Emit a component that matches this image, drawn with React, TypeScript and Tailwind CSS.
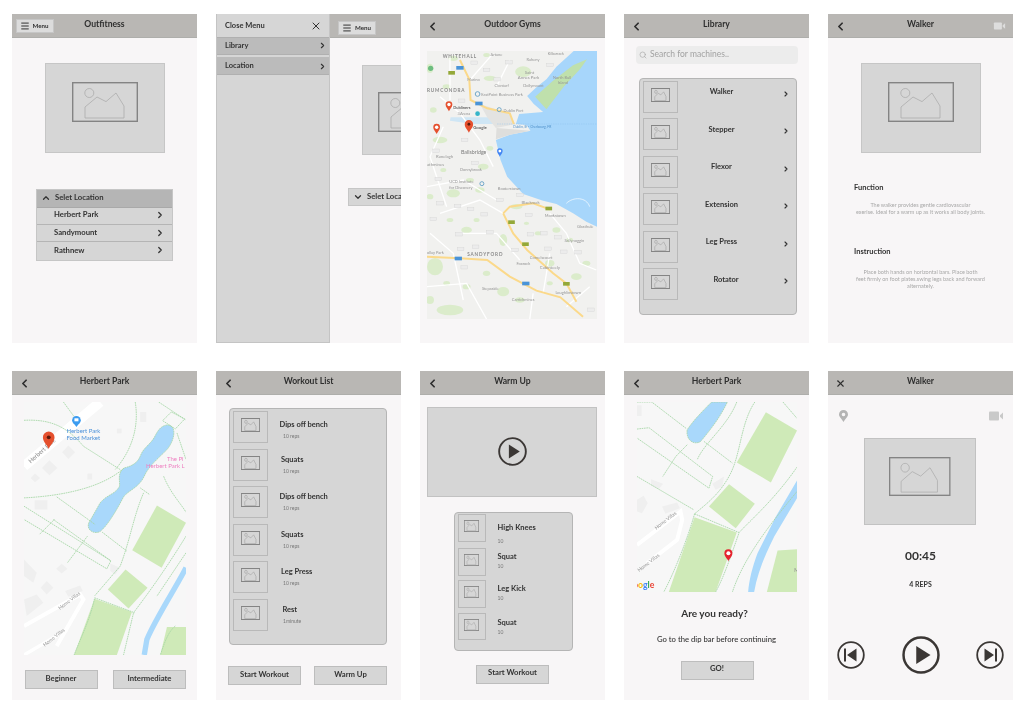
import { ChevronDown, ChevronLeft, ChevronRight, ChevronUp, Menu, Search, X } from "lucide-react";
import type { ReactNode } from "react";

function Header({ title, left }: { title: string; left?: ReactNode }) {
  return (
    <div className="grid h-[24px] shrink-0 grid-cols-[1fr_auto_1fr] items-center border-b border-[#aeaeab] bg-[#b9b7b4] text-[#2e2e2e]">
      <div className="flex pl-[6px] pt-[1px]">
        {left ?? <ChevronLeft size={13} strokeWidth={3.2} />}
      </div>
      <span className="pb-[3px] text-[8.6px] font-bold leading-[11px]">{title}</span>
      <span />
    </div>
  );
}

function Picture({ small }: { small?: boolean }) {
  return (
    <svg className="h-full w-full" viewBox="0 0 66 40" preserveAspectRatio="none">
      <rect x="0.7" y="0.7" width="64.6" height="38.6" fill="none" stroke="#848484" strokeWidth={small ? 4.4 : 1.4} />
      <circle cx="17.3" cy="11" r="4.5" fill="none" stroke="#acacac" strokeWidth={small ? 2.4 : 0.8} />
      <path d="M13 36V25L25 15l9 4.6L44 11l8 13v12z" fill="none" stroke="#acacac" strokeWidth={small ? 2.4 : 0.8} />
    </svg>
  );
}

function ImageBox() {
  return (
    <div className="mx-auto flex h-[90px] w-[120px] shrink-0 justify-center border border-[#c6c6c6] bg-[#d6d6d6] pt-[18px]">
      <div className="h-[40px] w-[66px]">
        <Picture />
      </div>
    </div>
  );
}

function Thumb({ big = true }: { big?: boolean }) {
  return big ? (
    <div className="flex h-[32px] w-[35px] shrink-0 justify-center border border-[#b9b9b9] pt-[6px]">
      <div className="h-[14px] w-[19px]">
        <Picture small />
      </div>
    </div>
  ) : (
    <div className="flex h-[27.5px] w-[27.5px] shrink-0 justify-center border border-[#b9b9b9] pt-[5px]">
      <div className="h-[12px] w-[15px]">
        <Picture small />
      </div>
    </div>
  );
}

function Button({ label, className }: { label: string; className: string }) {
  return (
    <button
      type="button"
      className={`flex h-[19px] w-[73px] items-center justify-center border border-[#bdbdbd] bg-[#d6d6d6] pb-[2px] text-[7.7px] font-bold text-[#333] ${className}`}
    >
      {label}
    </button>
  );
}

function MenuButton() {
  return (
    <div className="flex h-[14px] w-[38px] items-center gap-[3px] border border-[#c6c6c6] bg-[#dcdcdc] pl-[3px] text-[6.2px] font-bold text-[#333]">
      <Menu size={10} strokeWidth={2.4} />
      Menu
    </div>
  );
}

function VideoIcon({ color, className }: { color: string; className: string }) {
  return (
    <svg className={className} viewBox="0 0 14 10" fill={color}>
      <rect x="0" y="0.5" width="10" height="9" rx="1" />
      <path d="M11 4.2 14 1.5v7L11 5.8z" />
    </svg>
  );
}

function Pin({ x, y, color = "#e5502e", k = 1, ring }: { x: number; y: number; color?: string; k?: number; ring?: boolean }) {
  return (
    <g transform={`translate(${x} ${y}) scale(${k})`}>
      <path d="M0 0C-3-8-12-14-12-24A12 12 0 1 1 12-24C12-14 3-8 0 0Z" fill={color} />
      <circle cx="0" cy="-24" r={ring ? 6 : 4} fill={ring ? "#fff" : "#5c1a0c"} />
    </g>
  );
}

const roadBadges = [
  [193, 188], [230, 210], [297, 187], [262, 238], [421, 195], [155, 302], [164, 420], [78, 452], [195, 489], [85, 537],
  [270, 600], [90, 610], [143, 618], [182, 627], [223, 643], [70, 657], [357, 645], [240, 697], [147, 703], [362, 703],
  [402, 700], [445, 712], [415, 746], [462, 755], [505, 757], [152, 747], [197, 740], [316, 750], [163, 802], [544, 929], [331, 585],
];
const motorwayBadges = [[150, 203], [207, 310], [145, 775], [348, 850]];
const nationalBadges = [[125, 218], [417, 625], [305, 666], [347, 732], [470, 851]];
const parkPatches = [
  [60, 205, 10, 14], [240, 235, 18, 8], [340, 215, 24, 16], [90, 420, 22, 10], [220, 500, 16, 9], [130, 580, 20, 12],
  [320, 620, 18, 8], [75, 800, 24, 26], [170, 690, 16, 10], [280, 875, 18, 14], [420, 790, 14, 10], [120, 930, 40, 16],
  [280, 720, 12, 18], [500, 830, 16, 10], [210, 570, 14, 8], [440, 690, 12, 8], [130, 175, 14, 8], [230, 165, 10, 6],
  [110, 260, 12, 7], [70, 330, 10, 8], [180, 540, 12, 6], [240, 445, 10, 7], [100, 510, 9, 6], [60, 590, 10, 8],
  [200, 660, 9, 6], [120, 660, 10, 6], [385, 700, 10, 6], [350, 670, 8, 5], [480, 720, 10, 7], [530, 790, 12, 8],
  [420, 850, 9, 6], [330, 900, 14, 8], [230, 820, 11, 8], [170, 860, 12, 8], [60, 900, 12, 12], [110, 850, 10, 7],
];
const cityLabels: [string, number, number, number][] = [
  ["Artane", 242, 168, 12], ["Raheny", 350, 184, 12], ["Kilbarrack", 414, 165, 11], ["Saint", 345, 222, 13], ["Annes Park", 324, 238, 13],
  ["Clontarf", 254, 262, 12], ["Dollymount", 340, 262, 12], ["Marino", 172, 242, 12], ["North Bull", 430, 236, 12], ["Island", 444, 252, 12],
  ["EastPoint Business Park", 214, 288, 12], ["Dublin Port", 281, 335, 12], ["3Arena", 143, 346, 12], ["Ranelagh", 78, 473, 13], ["athmines", 51, 499, 13],
  ["Donnybrook", 150, 514, 12], ["UCD Institute", 118, 550, 12], ["for Discovery", 118, 566, 12], ["Booterstown", 264, 570, 12], ["Blackrock", 335, 613, 13],
  ["Monkstown", 405, 651, 12], ["Glasthule", 502, 683, 12], ["Sallynoggin", 464, 727, 12], ["ollay Park", 51, 761, 12], ["Foxrock", 320, 796, 12],
  ["Cornelscourt", 360, 777, 12], ["Cabinteely", 390, 806, 13], ["Stepaside", 216, 871, 12], ["Carrickmines", 306, 902, 12], ["Loughlinstown", 437, 883, 12],
];

function GymsMap() {
  return (
    <svg className="h-[268px] w-[170px] shrink-0" viewBox="51 153 511 804" preserveAspectRatio="none">
      <rect x="51" y="153" width="511" height="804" fill="#f1f1ef" />
      {parkPatches.map(([cx, cy, rx, ry]) => (
        <ellipse key={`${cx}-${cy}`} cx={cx} cy={cy} rx={rx} ry={ry} fill="#dbeccb" />
      ))}
      <path
        d="M492 153H562V680L530 665 490 640 440 612 400 602 340 582 292 530 272 480 258 420 300 404 362 392 350 375 318 372 328 342 400 336 372 312 352 288 380 262 410 238 440 200Z"
        fill="#a7d6fb"
      />
      <path d="M410 328 376 290 430 242 490 196 532 178 512 206 462 260Z" fill="#bfe0ac" />
      <path d="M122 352H300L312 372H190L120 362Z" fill="#cfe6f5" />
      <path d="M210 312 300 342 316 372 258 384 232 352Z" fill="#e3e3e1" />
      <path d="M260 384 362 392 300 404 258 418Z" fill="#dededc" />
      <path d="M262 372H562" stroke="#8fc3ee" strokeWidth="1.5" strokeDasharray="4 3" fill="none" />
      <path
        d="M90 290 150 340 210 420 250 500M51 560 160 540 260 600M90 640 210 600 280 640M150 700 260 700 330 780M51 860 170 850 230 957M420 640 470 700 510 790 560 810M250 160 180 240M370 880 360 957M420 760 400 880M100 380 60 470 110 620M300 180 260 260M120 170 120 300M60 700 130 760 160 900M470 920 540 860"
        stroke="#fff"
        strokeWidth="4"
        fill="none"
      />
      <path
        d="M150 180 178 238 182 300 232 325 300 340 312 372M51 770 150 775 232 780 300 830 380 872 452 892 520 950M280 640 310 700 352 750 430 820 470 850 500 905M280 640 300 620 370 610 420 628"
        stroke="#fbd98a"
        strokeWidth="6"
        fill="none"
      />
      <path d="M470 610C490 590 530 590 540 620" stroke="#fff" strokeWidth="2" fill="none" />
      {roadBadges.map(([x, y]) => (
        <rect key={`${x}-${y}`} x={x - 10} y={y - 5} width="20" height="10" fill="#ececec" stroke="#d0d0d0" />
      ))}
      {motorwayBadges.map(([x, y]) => (
        <rect key={`${x}-${y}`} x={x - 11} y={y - 5} width="22" height="11" fill="#4a94d8" />
      ))}
      {nationalBadges.map(([x, y]) => (
        <rect key={`${x}-${y}`} x={x - 10} y={y - 5} width="20" height="11" fill="#94a838" />
      ))}
      <g fill="#8b8b8b" fontSize="14" fontWeight="700" letterSpacing="2.5">
        <text x="98" y="173">WHITEHALL</text>
        <text x="51" y="275">RUMCONDRA</text>
        <text x="172" y="768">SANDYFORD</text>
      </g>
      <text x="153" y="462" fontSize="16" fill="#7b7b7b">Ballsbridge</text>
      {cityLabels.map(([label, x, y, size]) => (
        <text key={label} x={x} y={y} fontSize={size} fill="#959595">{label}</text>
      ))}
      <text x="190" y="386" fontSize="13" fontWeight="700" fill="#666">Google</text>
      <text x="130" y="326" fontSize="12" fontWeight="700" fill="#666">Dubliners</text>
      <text x="310" y="385" fontSize="10" fill="#4d8fc9">Dublin, IE - Cherbourg, FR</text>
      <circle cx="62" cy="205" r="8" fill="#6dbd7f" />
      <circle cx="203" cy="282" r="7" fill="none" stroke="#6fa7c9" strokeWidth="3" />
      <circle cx="268" cy="329" r="6" fill="none" stroke="#6fa7c9" strokeWidth="3" />
      <circle cx="203" cy="341" r="7" fill="#35b5c9" />
      <circle cx="216" cy="551" r="6" fill="none" stroke="#6fa7c9" strokeWidth="3" />
      <Pin x={117} y={334} k={0.85} ring />
      <Pin x={80} y={402} k={0.85} ring />
      <Pin x={177} y={398} k={1.05} />
      <Pin x={270} y={470} k={0.7} color="#4285f4" ring />
    </svg>
  );
}

function ParkMap() {
  return (
    <svg className="h-[253px] w-[162px] shrink-0" viewBox="72 127 485 760" preserveAspectRatio="none">
      <rect x="72" y="127" width="485" height="760" fill="#f7f7f7" />
      <path d="M72 320 300 127" stroke="#fff" strokeWidth="30" fill="none" />
      <g fill="#efefef">
        <path d="M205 258 225 278 205 298 186 278Z" />
        <path d="M148 302 172 325 148 347 126 325Z" />
        <path d="M105 342 120 355 105 368 92 355Z" />
        <rect x="262" y="342" width="14" height="18" />
        <rect x="104" y="422" width="38" height="28" />
        <rect x="420" y="157" width="18" height="30" />
        <rect x="350" y="207" width="14" height="14" />
        <path d="M185 613 202 628 185 642 168 628Z" />
        <path d="M72 600 110 640 100 670 72 650Z" />
        <path d="M140 665 160 685 140 705 122 685Z" />
        <path d="M195 695 240 678 248 695 205 712Z" />
        <path d="M72 720 110 705 130 730 80 770Z" />
        <path d="M330 612 360 625 345 645 330 635Z" />
      </g>
      <path d="M72 800 240 705 250 720 170 860" stroke="#fff" strokeWidth="12" fill="none" />
      <path d="M72 887 200 812" stroke="#fff" strokeWidth="10" fill="none" />
      <g fill="#cfeab8">
        <path d="M470 438 557 490 484 625 396 572Z" />
        <path d="M376 630 442 685 385 747 323 690Z" />
        <path d="M283 718 395 758 350 887H222Z" />
        <path d="M500 803H557V887H480Z" />
      </g>
      <path d="M557 625C530 680 470 770 440 840L432 887" stroke="#a9d8fb" strokeWidth="16" fill="none" />
      <path
        d="M500 196C485 198 475 208 465 228 452 255 430 262 420 290 410 315 385 322 372 325 350 340 360 365 358 380 345 405 320 405 300 430L266 490C258 510 280 526 300 516 325 495 350 450 370 412 385 392 415 385 432 350 445 320 470 300 500 270 525 240 530 195 500 196Z"
        fill="#a9d8fb"
        stroke="#a6d6a6"
        strokeWidth="2.4"
        strokeDasharray="5 2"
      />
      <g fill="none" stroke="#a6d6a6" strokeWidth="2.6" strokeDasharray="5 2">
        <path d="M72 182C150 178 200 200 250 260L360 330" />
        <path d="M72 415C170 410 300 390 372 325" />
        <path d="M190 127 225 175M405 127C420 220 380 290 345 330" />
        <path d="M475 127 555 180M513 157 553 178 525 208 487 183ZM530 220 557 300" />
        <path d="M490 350C510 400 540 430 557 458" />
        <path d="M72 440 332 604 320 628 72 480" />
        <path d="M163 480 118 525M262 530 202 610M160 480 332 604" />
        <path d="M170 412 285 495M306 518 380 575" />
        <path d="M420 385 448 405M430 400C400 470 390 540 360 620L283 710" />
        <path d="M557 530C490 640 430 720 400 760L370 887" />
        <path d="M283 715 403 760M283 718C270 780 240 840 222 887" />
        <path d="M557 580 470 710M525 800C500 820 490 860 480 887" />
      </g>
      <circle cx="229" cy="182" r="13" fill="#3b9cf0" />
      <path d="M229 202 220 190H238Z" fill="#3b9cf0" />
      <rect x="223" y="176" width="12" height="9" fill="#fff" />
      <text x="199" y="221" fontSize="18" fill="#4a90d9">Herbert Park</text>
      <text x="199" y="242" fontSize="18" fill="#4a90d9">Food Market</text>
      <text x="500" y="304" fontSize="18" fill="#ee7fc0">The Pi</text>
      <text x="437" y="325" fontSize="18" fill="#ee7fc0">Herbert Park L</text>
      <text x="92" y="312" fontSize="18" fill="#8a8a8a" transform="rotate(-42 92 312)">Herbert Park</text>
      <text x="180" y="752" fontSize="15" fill="#999" transform="rotate(-38 180 752)">Home Villas</text>
      <text x="134" y="862" fontSize="15" fill="#999" transform="rotate(-38 134 862)">Home Villas</text>
      <Pin x={146} y={268} k={1.45} />
    </svg>
  );
}

function ReadyMap() {
  return (
    <svg className="h-[190px] w-[160px] shrink-0" viewBox="680 127 478 569" preserveAspectRatio="none">
      <rect x="680" y="127" width="478" height="569" fill="#f7f7f7" />
      <g fill="#efefef">
        <rect x="680" y="137" width="14" height="32" />
        <path d="M722 358 758 372 745 388 722 378Z" />
        <path d="M755 440 800 428 808 445 765 462Z" />
        <path d="M905 372 940 350 935 380 915 390Z" />
        <path d="M680 420 700 408 712 430 695 460 680 455Z" />
      </g>
      <path d="M680 555 810 455 815 480 800 540 710 610" stroke="#fff" strokeWidth="12" fill="none" />
      <g fill="#cfeab8">
        <path d="M1065 158 1158 212 1080 368 978 308Z" />
        <path d="M955 373 1032 432 975 505 895 440Z" />
        <path d="M852 472 978 518 915 696H775Z" />
        <path d="M1100 572 1158 568V696H1068Z" />
      </g>
      <path d="M1158 362 1095 470 1040 580C1025 620 1015 660 1012 696H1030C1040 640 1060 590 1090 530L1158 415Z" fill="#a9d8fb" />
      <path
        d="M903 127 950 127C930 170 900 210 870 245 850 258 825 240 830 210 850 180 880 150 903 127Z"
        fill="#a9d8fb"
        stroke="#a6d6a6"
        strokeWidth="2.4"
        strokeDasharray="5 2"
      />
      <g fill="none" stroke="#a6d6a6" strokeWidth="2.6" strokeDasharray="5 2">
        <path d="M680 127 724 127 828 207M680 208 716 204 906 350 895 385 680 235" />
        <path d="M796 290 757 350M830 255 796 290M880 245 965 310" />
        <path d="M978 127C950 200 880 250 860 300M1032 127C990 190 990 280 960 340 930 400 890 430 852 462" />
        <path d="M1116 127 1158 176M680 350 850 450" />
        <path d="M852 462 985 518M852 462C830 540 790 640 760 696" />
        <path d="M1158 322C1090 420 1020 480 985 518 960 590 940 650 915 696" />
        <path d="M1158 395C1080 490 1000 590 965 696" />
      </g>
      <text x="738" y="510" fontSize="15" fill="#999" transform="rotate(-38 738 510)">Home Villas</text>
      <text x="687" y="636" fontSize="15" fill="#999" transform="rotate(-38 687 636)">Home Villas</text>
      <text x="1150" y="636" fontSize="14" fill="#888">M</text>
      <text x="668" y="685" fontSize="26" fontWeight="700">
        <tspan fill="#ea4335">o</tspan>
        <tspan fill="#fbbc05">o</tspan>
        <tspan fill="#4285f4">g</tspan>
        <tspan fill="#34a853">l</tspan>
        <tspan fill="#ea4335">e</tspan>
      </text>
      <Pin x={953} y={604} k={1} color="#e5232e" ring />
    </svg>
  );
}

function PlayIcon({ className }: { className: string }) {
  return (
    <svg className={className} viewBox="0 0 40 40">
      <circle cx="20" cy="20" r="18.4" fill="none" stroke="#3b3735" strokeWidth="2.6" />
      <path d="M15 10.5 30 20 15 29.5Z" fill="#3b3735" />
    </svg>
  );
}

function SkipIcon({ next }: { next?: boolean }) {
  return (
    <svg className="h-[28px] w-[28px]" viewBox="0 0 28 28">
      <circle cx="14" cy="14" r="12.8" fill="none" stroke="#3b3735" strokeWidth="1.8" />
      {next ? <path d="M8.5 7.5 18 14l-9.5 6.5zM19 7.5h2v13h-2z" fill="#3b3735" /> : <path d="M19.5 7.5 10 14l9.5 6.5zM7 7.5h2v13H7z" fill="#3b3735" />}
    </svg>
  );
}

function LocationDropdown() {
  return (
    <div className="ml-[24px] mt-[36px] w-[137px] border border-[#c6c6c6] text-[7.7px] font-bold text-[#333]">
      <div className="flex h-[18px] items-center gap-[4px] border-b border-[#a9a9a9] bg-[#b5b5b5] pl-[4px] pb-[1px]">
        <ChevronUp size={10} strokeWidth={3} />
        Selet Location
      </div>
      {["Herbert Park", "Sandymount", "Rathnew"].map((place) => (
        <div key={place} className="flex h-[17.4px] items-center justify-between border-b border-[#b5b5b5] bg-[#d6d6d6] pb-[1px] pl-[17px] pr-[7px] last:border-b-0">
          {place}
          <ChevronRight size={10} strokeWidth={3} />
        </div>
      ))}
    </div>
  );
}

const machines = [
  { name: "Walker", label: "w-[88px]" },
  { name: "Stepper", label: "w-[88px]" },
  { name: "Flexor", label: "w-[88px]" },
  { name: "Extension", label: "w-[88px]" },
  { name: "Leg Press", label: "w-[88px]" },
  { name: "Rotator", label: "w-[88px] pl-[9px]" },
];

const workouts = [
  { name: "Dips off bench", reps: "10 reps", box: "pt-[8px]", label: "ml-[11.5px]" },
  { name: "Squats", reps: "10 reps", box: "pt-[5px]", label: "ml-[13px]" },
  { name: "Dips off bench", reps: "10 reps", box: "pt-[5px]", label: "ml-[11.5px]" },
  { name: "Squats", reps: "10 reps", box: "pt-[5px]", label: "ml-[13px]" },
  { name: "Leg Press", reps: "10 reps", box: "pt-[5px]", label: "ml-[13px]" },
  { name: "Rest", reps: "1minute", box: "pt-[5px]", label: "ml-[14.5px]" },
];

const warmups = [
  { name: "High Knees", box: "pt-[8px]", gap: "mt-[4.5px]" },
  { name: "Squat", box: "pt-[2.5px]", gap: "mt-[1px]" },
  { name: "Leg Kick", box: "pt-[3px]", gap: "mt-[1px]" },
  { name: "Squat", box: "pt-[4px]", gap: "mt-[1px]" },
];

function Screen({ children }: { children: ReactNode }) {
  return <div className="flex h-[329px] w-[185px] shrink-0 flex-col overflow-hidden bg-[#f8f6f7] text-[#333]">{children}</div>;
}

export default function App() {
  return (
    <div className="flex h-[711px] w-[1024px] flex-col gap-[28px] overflow-hidden bg-white pl-[12px] pt-[14px] blur-[0.4px] [font-family:Lato,'Liberation_Sans',sans-serif]">
      <div className="flex gap-[19px]">
        <Screen>
          <div className="relative">
            <Header title="Outfitness" left={<span />} />
            <div className="absolute left-[3.5px] top-[5px]">
              <MenuButton />
            </div>
          </div>
          <div className="mt-[24.5px]">
            <ImageBox />
          </div>
          <LocationDropdown />
        </Screen>

        <Screen>
          <div className="flex h-full">
            <div className="flex w-[114px] shrink-0 flex-col border-x border-b border-[#c4c4c4] bg-[#d6d6d6] text-[7.5px] font-bold">
              <div className="flex h-[23px] items-center justify-between pl-[8px] pr-[7px]">
                Close Menu
                <X size={12} strokeWidth={2} />
              </div>
              <div className="flex h-[18px] items-center justify-between border-y border-[#b0b0b0] bg-[#bbbbbb] pb-[1px] pl-[8px] pr-[2px]">
                Library
                <ChevronRight size={9} strokeWidth={3} />
              </div>
              <div className="mt-[2px] flex h-[18px] items-center justify-between border-b border-[#b0b0b0] bg-[#bbbbbb] pl-[8px] pr-[2px] pt-[1px]">
                Location
                <ChevronRight size={9} strokeWidth={3} />
              </div>
            </div>
            <div className="min-w-0 flex-1 overflow-hidden">
              <div className="h-[24px] border-b border-[#aeaeab] bg-[#b9b7b4] pl-[8px] pt-[7px]">
                <MenuButton />
              </div>
              <div className="ml-[32px] mt-[27px] flex h-[90px] w-[120px] border border-[#c6c6c6] bg-[#d6d6d6] pl-[15px] pt-[26px]">
                <div className="h-[40px] w-[66px] shrink-0">
                  <Picture />
                </div>
              </div>
              <div className="ml-[18px] mt-[33px] flex h-[18px] w-[137px] items-center gap-[4px] border border-[#c6c6c6] bg-[#d6d6d6] pb-[1px] pl-[4px] text-[7.7px] font-bold">
                <ChevronDown size={10} strokeWidth={3} />
                Selet Location
              </div>
            </div>
          </div>
        </Screen>

        <Screen>
          <Header title="Outdoor Gyms" />
          <div className="ml-[7px] mt-[13px]">
            <GymsMap />
          </div>
        </Screen>

        <Screen>
          <Header title="Library" />
          <div className="ml-[12px] mt-[8px] flex h-[17.5px] w-[162px] items-center gap-[3px] rounded-[4px] bg-[#ececec] pl-[3px] text-[8.5px] text-[#a2a2a2]">
            <Search size={8} strokeWidth={1.8} />
            Search for machines..
          </div>
          <div className="ml-[14.5px] mt-[14.5px] flex h-[237px] w-[158px] flex-col gap-[5.6px] rounded-[4px] border border-[#b5b5b5] bg-[#d6d6d6] pl-[3px] pt-[1.5px]">
            {machines.map((machine) => (
              <div key={machine.name} className="flex">
                <Thumb />
                <span className={`${machine.label} pt-[6.5px] text-center text-[7.5px] font-bold leading-[10px]`}>{machine.name}</span>
                <span className="ml-[16px] pt-[9px]">
                  <ChevronRight size={8} strokeWidth={3.4} />
                </span>
              </div>
            ))}
          </div>
        </Screen>

        <Screen>
          <div className="relative">
            <Header title="Walker" />
            <VideoIcon color="#dddddd" className="absolute right-[7px] top-[8px] h-[8px] w-[13px]" />
          </div>
          <div className="mt-[24.5px]">
            <ImageBox />
          </div>
          <p className="ml-[26px] mt-[30px] text-[7.5px] font-bold leading-[10px]">Function</p>
          <p className="mt-[9px] text-center text-[5.5px] leading-[7px] text-[#a8a8a8]">
            The walker provides gentle cardiovascular
            <br />
            exerise. Ideal for a warm up as it works all body joints.
          </p>
          <p className="ml-[26px] mt-[31px] text-[7.5px] font-bold leading-[10px]">Instruction</p>
          <p className="mt-[12px] text-center text-[5.5px] leading-[7px] text-[#a8a8a8]">
            Place both hands on horizontal bars. Place both
            <br />
            feet firmly on foot plates.swing legs back and forward
            <br />
            alternately.
          </p>
        </Screen>
      </div>

      <div className="flex gap-[19px]">
        <Screen>
          <Header title="Herbert Park" />
          <div className="ml-[12px] mt-[7px]">
            <ParkMap />
          </div>
          <div className="ml-[12.5px] mt-[15px] flex">
            <Button label="Beginner" className="" />
            <Button label="Intermediate" className="ml-[15.5px]" />
          </div>
        </Screen>

        <Screen>
          <Header title="Workout List" />
          <div className="ml-[13px] mt-[13px] flex h-[237px] w-[158px] flex-col gap-[5.6px] rounded-[4px] border border-[#b5b5b5] bg-[#d6d6d6] pl-[3px] pt-[2px]">
            {workouts.map((workout, index) => (
              <div key={index} className="flex">
                <Thumb />
                <div className={workout.box}>
                  <p className={`${workout.label} text-[7.5px] font-bold leading-[11px]`}>{workout.name}</p>
                  <p className="ml-[15px] mt-[3px] text-[5px] leading-[7px] text-[#777]">{workout.reps}</p>
                </div>
              </div>
            ))}
          </div>
          <div className="ml-[12px] mt-[21px] flex">
            <Button label="Start Workout" className="" />
            <Button label="Warm Up" className="ml-[13px]" />
          </div>
        </Screen>

        <Screen>
          <Header title="Warm Up" />
          <div className="ml-[7px] mt-[12px] flex h-[89.5px] w-[170px] shrink-0 items-center justify-center border border-[#c2c2c2] bg-[#d6d6d6]">
            <PlayIcon className="h-[29px] w-[29px]" />
          </div>
          <div className="ml-[34px] mt-[15px] flex h-[139px] w-[119px] shrink-0 flex-col gap-[4.7px] rounded-[4px] border border-[#b5b5b5] bg-[#d6d6d6] pl-[3px] pt-[1.5px]">
            {warmups.map((item, index) => (
              <div key={index} className="flex">
                <Thumb big={false} />
                <div className={`ml-[12px] ${item.box}`}>
                  <p className="text-[7.5px] font-bold leading-[11px]">{item.name}</p>
                  <p className={`${item.gap} text-[5px] leading-[6px] text-[#777]`}>10</p>
                </div>
              </div>
            ))}
          </div>
          <div className="ml-[56px] mt-[14px]">
            <Button label="Start Workout" className="" />
          </div>
        </Screen>

        <Screen>
          <Header title="Herbert Park" />
          <div className="ml-[12.5px] mt-[7px]">
            <ReadyMap />
          </div>
          <p className="mt-[14px] pr-[4px] text-center text-[10px] font-bold leading-[14px]">Are you ready?</p>
          <p className="mt-[14px] text-center text-[7.7px] font-medium leading-[10px]">Go to the dip bar before continuing</p>
          <div className="ml-[56.5px] mt-[16.5px]">
            <Button label="GO!" className="" />
          </div>
        </Screen>

        <Screen>
          <Header title="Walker" left={<X className="ml-[1px]" size={11} strokeWidth={2.4} />} />
          <div className="flex items-center justify-between pl-[11px] pr-[10px] pt-[15px]">
            <svg className="h-[12px] w-[9px]" viewBox="0 0 9 12">
              <path fillRule="evenodd" d="M4.5 12C3 9 0 7 0 4.5a4.5 4.5 0 0 1 9 0C9 7 6 9 4.5 12ZM4.5 6.3a1.8 1.8 0 1 0 0-3.6 1.8 1.8 0 0 0 0 3.6Z" fill="#b4b4b4" />
            </svg>
            <VideoIcon color="#c9c9c9" className="h-[10px] w-[14px]" />
          </div>
          <div className="ml-[36px] mt-[16px] flex h-[87px] w-[112px] shrink-0 justify-center border border-[#c2c2c2] bg-[#d6d6d6] pt-[18px]">
            <div className="h-[39px] w-[61.5px]">
              <Picture />
            </div>
          </div>
          <p className="mt-[24px] text-center text-[12px] font-bold leading-[14px]">00:45</p>
          <p className="mt-[17px] text-center text-[7px] font-bold leading-[8px]">4 REPS</p>
          <div className="mt-[48px] flex items-center justify-between pl-[9px] pr-[9px]">
            <SkipIcon />
            <PlayIcon className="h-[38px] w-[38px]" />
            <SkipIcon next />
          </div>
        </Screen>
      </div>
    </div>
  );
}
